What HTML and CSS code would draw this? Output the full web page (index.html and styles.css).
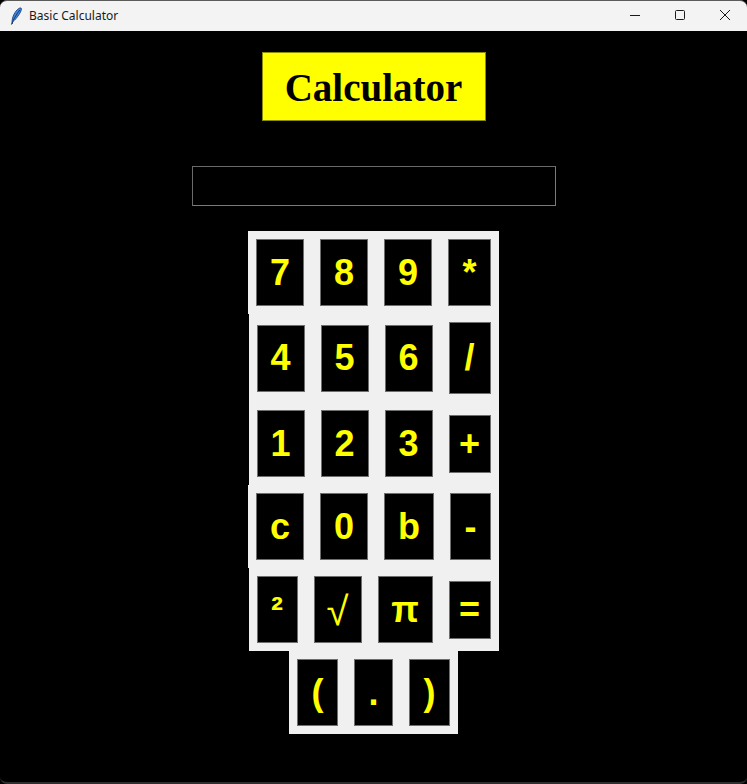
FILE: index.html
```html
<!DOCTYPE html>
<html lang="en">
<head>
<meta charset="utf-8">
<title>Basic Calculator</title>
<link rel="stylesheet" href="styles.css">
</head>
<body>
<div class="window">
  <header class="titlebar">
    <svg class="app-icon" width="16" height="18" viewBox="0 0 16 18" aria-hidden="true">
      <path d="M4.2 16.8 C3.6 12.5 5.2 6.6 9.6 2.4 C11 1.1 12.6 0.6 13.2 1.2 C13.9 1.9 12.9 4.8 11 7.6 C8.9 10.8 6.6 13.4 4.6 14.8 Z" fill="#3f86e0" stroke="#1b3f7a" stroke-width="0.9"/>
      <path d="M3.4 17.6 L5.2 13.6 M5.4 13 C7 10 9 6.5 11.8 3" stroke="#14305e" stroke-width="0.9" fill="none"/>
    </svg>
    <span class="win-title">Basic Calculator</span>
    <div class="controls">
      <span class="ctl"><svg width="12" height="12" viewBox="0 0 12 12"><path d="M1 6.5 H11" stroke="#1a1a1a" stroke-width="1"/></svg></span>
      <span class="ctl"><svg width="12" height="12" viewBox="0 0 12 12"><rect x="1.5" y="1.5" width="9" height="9" rx="1" fill="none" stroke="#1a1a1a" stroke-width="1"/></svg></span>
      <span class="ctl"><svg width="12" height="12" viewBox="0 0 12 12"><path d="M1 1 L11 11 M11 1 L1 11" stroke="#1a1a1a" stroke-width="1"/></svg></span>
    </div>
  </header>
  <main class="app">
    <div class="heading">Calculator</div>
    <div class="display"></div>
    <div class="keypad">
      <div class="row">
        <button class="key w48">7</button>
        <button class="key w48">8</button>
        <button class="key w48">9</button>
        <button class="key w43">*</button>
      </div>
      <div class="row">
        <button class="key w48">4</button>
        <button class="key w48">5</button>
        <button class="key w48">6</button>
        <button class="key w42 tall">/</button>
      </div>
      <div class="row">
        <button class="key w48">1</button>
        <button class="key w48">2</button>
        <button class="key w48">3</button>
        <button class="key w42 short">+</button>
      </div>
      <div class="row">
        <button class="key w48">c</button>
        <button class="key w48">0</button>
        <button class="key w50">b</button>
        <button class="key w41">-</button>
      </div>
      <div class="row">
        <button class="key w41">²</button>
        <button class="key w48 thin">√</button>
        <button class="key w55">π</button>
        <button class="key w42 short">=</button>
      </div>
      <div class="row">
        <button class="key w41">(</button>
        <button class="key w39">.</button>
        <button class="key w41">)</button>
      </div>
    </div>
  </main>
</div>
</body>
</html>
```

FILE: styles.css
```css
* { box-sizing: border-box; }
html, body {
  margin: 0;
  padding: 0;
  background: #000;
}
.window {
  width: 747px;
  height: 784px;
  background: #000;
  display: flex;
  flex-direction: column;
  border-bottom: 2px solid #2e2e2e;
  border-radius: 0 0 7px 7px;
  overflow: hidden;
}
.titlebar {
  height: 31px;
  flex: none;
  background: #f3f3f3;
  border-top: 1px solid #5b5b5b;
  border-radius: 7px 7px 0 0;
  display: flex;
  align-items: center;
  padding-left: 8px;
  font-family: "Noto Sans", "Liberation Sans", sans-serif;
  font-size: 12px;
  color: #1a1a1a;
}
.app-icon {
  flex: none;
  margin-right: 5px;
  margin-top: -1px;
}
.win-title {
  flex: 1;
  margin-top: -1px;
}
.controls {
  display: flex;
  height: 100%;
}
.ctl {
  width: 45px;
  display: flex;
  align-items: center;
  justify-content: center;
  margin-top: -2px;
}
.app {
  flex: 1;
  display: flex;
  flex-direction: column;
  align-items: center;
}
.heading {
  margin-top: 21px;
  width: 224px;
  height: 69px;
  background: #ffff00;
  border: 1px solid #8c8c00;
  box-shadow: inset 0 0 0 1px #ffff00;
  display: flex;
  align-items: center;
  justify-content: center;
  font-family: "Liberation Serif", "Times New Roman", serif;
  font-weight: bold;
  font-size: 39px;
  color: #000;
  padding-top: 1px;
}
.display {
  margin-top: 45px;
  width: 364px;
  height: 40px;
  border: 1px solid #6a6a6a;
  border-right-color: #7a7a7a;
  border-bottom-color: #7a7a7a;
  background: #000;
}
.keypad {
  margin-top: 25px;
  display: flex;
  flex-direction: column;
  align-items: center;
}
.row {
  display: flex;
  align-items: center;
  gap: 16px;
  padding: 8px;
  background: #f0f0f0;
}
.key {
  height: 67px;
  padding: 0;
  margin: 0;
  background: #000;
  border: 1px solid #6e6e6e;
  color: #ffff00;
  font-family: "Liberation Sans", Arial, sans-serif;
  font-weight: bold;
  font-size: 36px;
  line-height: 1;
  display: flex;
  align-items: center;
  justify-content: center;
}
.key.tall { height: 72px; }
.key.short { height: 58px; }
.key.thin {
  font-family: "DejaVu Sans", sans-serif;
  font-weight: 200;
  font-size: 40px;
  padding-top: 2px;
}
.w39 { width: 39px; }
.w41 { width: 41px; }
.w42 { width: 42px; }
.w43 { width: 43px; }
.w48 { width: 48px; }
.w50 { width: 50px; }
.w55 { width: 55px; }
```
